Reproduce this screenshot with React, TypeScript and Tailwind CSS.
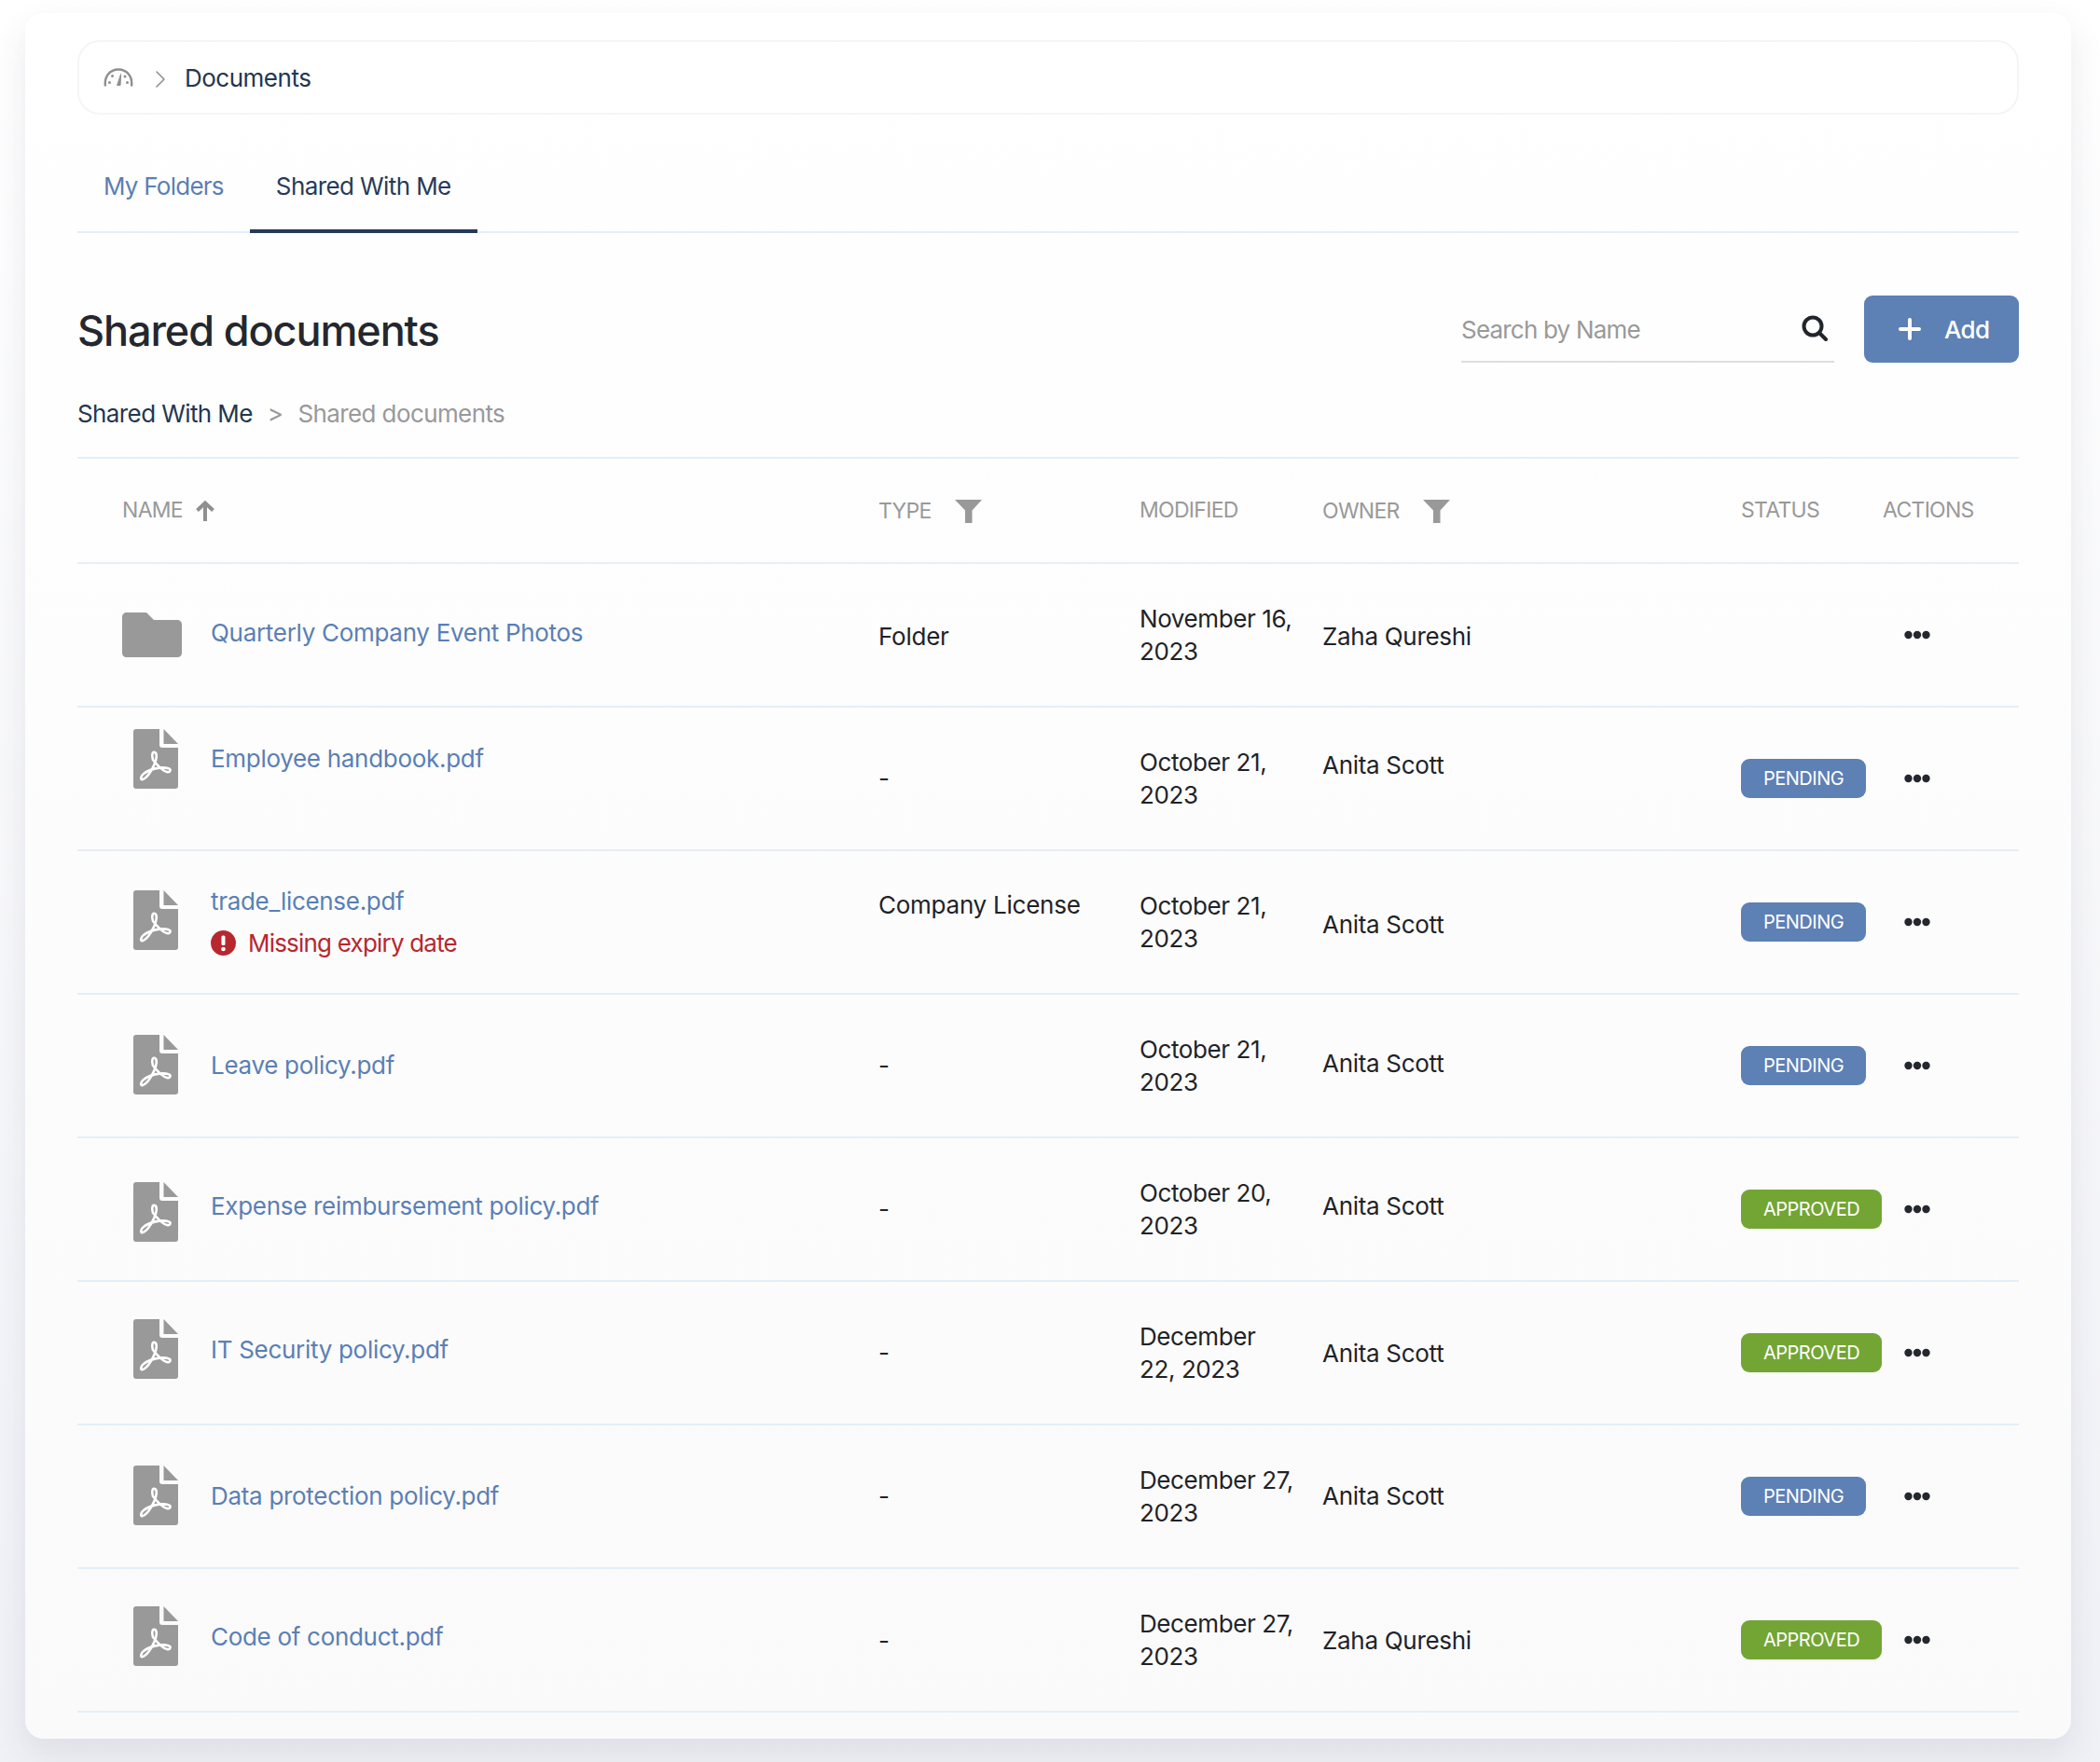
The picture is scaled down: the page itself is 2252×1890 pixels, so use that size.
import { ChevronRight } from "lucide-react";

type Row = {
  kind: "folder" | "pdf";
  name: string;
  error?: string;
  type: string;
  date: [string, string];
  owner: string;
  status?: "PENDING" | "APPROVED";
  nameShift: string;
  iconShift: string;
  typeShift: string;
  ownerShift: string;
};

const rows: Row[] = [
  { kind: "folder", name: "Quarterly Company Event Photos", type: "Folder", date: ["November 16,", "2023"], owner: "Zaha Qureshi", nameShift: "mb-[4px]", iconShift: "mb-[0px]", typeShift: "mt-[4px]", ownerShift: "mt-[4px]" },
  { kind: "pdf", name: "Employee handbook.pdf", type: "-", date: ["October 21,", "2023"], owner: "Anita Scott", status: "PENDING", nameShift: "mb-[42px]", iconShift: "mb-[42px]", typeShift: "mt-[0px]", ownerShift: "mb-[28px]" },
  { kind: "pdf", name: "trade_license.pdf", error: "Missing expiry date", type: "Company License", date: ["October 21,", "2023"], owner: "Anita Scott", status: "PENDING", nameShift: "mb-[0px]", iconShift: "mb-[4px]", typeShift: "mb-[36px]", ownerShift: "mt-[6px]" },
  { kind: "pdf", name: "Leave policy.pdf", type: "-", date: ["October 21,", "2023"], owner: "Anita Scott", status: "PENDING", nameShift: "mb-[0px]", iconShift: "mb-[2px]", typeShift: "mt-[0px]", ownerShift: "mb-[4px]" },
  { kind: "pdf", name: "Expense reimbursement policy.pdf", type: "-", date: ["October 20,", "2023"], owner: "Anita Scott", status: "APPROVED", nameShift: "mb-[6px]", iconShift: "mt-[6px]", typeShift: "mt-[0px]", ownerShift: "mb-[6px]" },
  { kind: "pdf", name: "IT Security policy.pdf", type: "-", date: ["December", "22, 2023"], owner: "Anita Scott", status: "APPROVED", nameShift: "mb-[6px]", iconShift: "mb-[8px]", typeShift: "mt-[0px]", ownerShift: "mt-[2px]" },
  { kind: "pdf", name: "Data protection policy.pdf", type: "-", date: ["December 27,", "2023"], owner: "Anita Scott", status: "PENDING", nameShift: "mb-[0px]", iconShift: "mb-[3px]", typeShift: "mt-[0px]", ownerShift: "mb-[0px]" },
  { kind: "pdf", name: "Code of conduct.pdf", type: "-", date: ["December 27,", "2023"], owner: "Zaha Qureshi", status: "APPROVED", nameShift: "mb-[6px]", iconShift: "mb-[8px]", typeShift: "mt-[2px]", ownerShift: "mt-[2px]" },
];

const GaugeIcon = () => (
  <svg width="32" height="20" viewBox="0 0 32 20" fill="none">
    <path d="M2 19.5C0.5 9 7 1.5 16 1.5S31.5 9 30 19.5" stroke="#8f8f8f" strokeWidth="2.4" />
    <path d="M14.6 18.5L18.6 6.5L18 18.5Z" fill="#8f8f8f" stroke="#8f8f8f" strokeWidth="1" />
    <circle cx="6.5" cy="15.5" r="1.5" fill="#8f8f8f" />
    <circle cx="9.5" cy="8.5" r="1.5" fill="#8f8f8f" />
    <circle cx="23" cy="9" r="1.5" fill="#8f8f8f" />
    <circle cx="25.5" cy="15.5" r="1.5" fill="#8f8f8f" />
  </svg>
);

const FilterIcon = () => (
  <svg width="29" height="25" viewBox="0 0 29 25" fill="#999999">
    <path d="M0 0H29L18.5 11.5V25H11V11.5Z" />
  </svg>
);

const SortIcon = () => (
  <svg width="20" height="22" viewBox="0 0 20 22" fill="none" stroke="#8f8f8f" strokeWidth="4">
    <path d="M10 22V3" />
    <path d="M1.5 10.5L10 2.5L18.5 10.5" />
  </svg>
);

const SearchIcon = () => (
  <svg width="28" height="28" viewBox="0 0 28 28" fill="none" stroke="#22262b" strokeWidth="4" strokeLinecap="round">
    <circle cx="12" cy="12" r="9.5" />
    <path d="M19 19L26 26" />
  </svg>
);

const PlusIcon = () => (
  <svg width="24" height="24" viewBox="0 0 24 24" fill="none" stroke="#ffffff" strokeWidth="4" strokeLinecap="round">
    <path d="M12 2V22" />
    <path d="M2 12H22" />
  </svg>
);

const FolderIcon = () => (
  <svg width="64" height="48" viewBox="0 0 64 48" fill="#999999">
    <path d="M5 0H26L34 8H59C62 8 64 10 64 13V43C64 46 62 48 59 48H5C2 48 0 46 0 43V5C0 2 2 0 5 0Z" />
  </svg>
);

const PdfIcon = () => (
  <svg width="48" height="64" viewBox="0 0 48 64">
    <path d="M3 0H28V17C28 19 29 20 31 20H48V61C48 63 47 64 45 64H3C1 64 0 63 0 61V3C0 1 1 0 3 0Z" fill="#999999" />
    <path d="M32.5 0L48 16H32.5Z" fill="#999999" />
    <path
      d="M21 33C19 27 21 24 23 25C26 26 25 33 22 39C19 46 14 53 10 54C7 55 8 50 11 48C17 43 30 40 37 42C41 43 40 47 36 46C31 45 25 38 21 33Z"
      fill="none"
      stroke="#ffffff"
      strokeWidth="2.6"
    />
  </svg>
);

const ErrorIcon = () => (
  <svg width="27" height="27" viewBox="0 0 27 27">
    <circle cx="13.5" cy="13.5" r="13.5" fill="#b8272e" />
    <rect x="11.5" y="5.5" width="4" height="10.5" rx="1.5" fill="#ffffff" />
    <circle cx="13.5" cy="20" r="2.3" fill="#ffffff" />
  </svg>
);

const DotsIcon = () => (
  <svg width="28" height="10" viewBox="0 0 28 10" fill="#24272e">
    <circle cx="4.5" cy="5" r="4.2" />
    <circle cx="14" cy="5" r="4.2" />
    <circle cx="23.5" cy="5" r="4.2" />
  </svg>
);

const gridCols = "grid grid-cols-[859px_280px_196px_449px_152px_1fr] items-center";

export default function App() {
  return (
    <div className="w-[2252px] h-[1890px] bg-gradient-to-b from-white to-[#f0f1f6] pl-[27px] pt-[14px] font-['Inter',sans-serif] text-[26px] leading-[35.5px] tracking-[-0.4px] overflow-hidden">
      <div className="w-[2194px] h-[1851px] rounded-[20px] bg-gradient-to-b from-white to-[#fafafa] shadow-[0_16px_36px_rgba(60,60,90,0.10)] px-[56px] pt-[29px]">
        {/* Top breadcrumb */}
        <div className="h-[80px] rounded-[24px] border-2 border-[#f4f5f6] flex items-center pl-[26px]">
          <GaugeIcon />
          <ChevronRight className="ml-[13px] mt-[3px] w-[32px] h-[32px] text-[#8f8f8f]" strokeWidth={1.2} />
          <span className="ml-[10px] mt-[1px] text-[#24364f] tracking-[-0.5px]">Documents</span>
        </div>

        {/* Tabs */}
        <div className="h-[127px] border-b-2 border-[#e3effa] flex items-end">
          <div className="px-[28px] h-[81px] pt-[13px] -mb-[2px] text-[#5a7fb5] tracking-[-0.75px]">My Folders</div>
          <div className="px-[28px] h-[81px] pt-[13px] -mb-[2px] border-b-4 border-[#263b5a] text-[#263b5a] tracking-[-0.6px]">Shared With Me</div>
        </div>

        {/* Title row */}
        <div className="mt-[67px] h-[72px] flex items-center justify-between">
          <h1 className="mt-[3px] text-[45px] font-medium text-[#24272e] tracking-[-1.1px]">Shared documents</h1>
          <div className="flex items-center gap-[32px]">
            <div className="w-[400px] h-[72px] border-b-2 border-[#dddddd] flex items-center justify-between pr-[7px] text-[#999999] tracking-[-0.8px]">
              <span className="mt-[4px]">Search by Name</span>
              <SearchIcon />
            </div>
            <button className="w-[166px] h-[72px] rounded-[9px] bg-[#5d80b5] text-white flex items-center pl-[37px] gap-[25px] font-medium">
              <PlusIcon />
              <span className="mt-[1px] tracking-[-0.7px]">Add</span>
            </button>
          </div>
        </div>

        {/* Sub breadcrumb */}
        <div className="mt-[37px] h-[36px] flex items-center text-[#24364f] tracking-[-0.6px]">
          <span>Shared With Me</span>
          <span className="ml-[16px] text-[#999999]">&gt;</span>
          <span className="ml-[16px] text-[#999999]">Shared documents</span>
        </div>

        {/* Table */}
        <div className="mt-[28px] border-t-2 border-[#e3effa]">
          <div className={`${gridCols} h-[113px] border-b-2 border-[#e3effa] text-[23px] text-[#999999] tracking-[-0.7px]`}>
            <div className="pl-[48px] flex items-center gap-[14px]">
              NAME
              <SortIcon />
            </div>
            <div className="flex items-center gap-[25px] mt-[2px]">
              TYPE
              <FilterIcon />
            </div>
            <div>MODIFIED</div>
            <div className="flex items-center gap-[25px] mt-[2px]">
              OWNER
              <FilterIcon />
            </div>
            <div>STATUS</div>
            <div>ACTIONS</div>
          </div>
          {rows.map((row) => {
            return (
              <div key={row.name} className={`${gridCols} h-[154px] border-b-2 border-[#e3effa] text-[#1f2328]`}>
                <div className="flex items-center">
                  {row.kind === "folder" ? (
                    <div className={`ml-[48px] w-[95px] ${row.iconShift}`}>
                      <FolderIcon />
                    </div>
                  ) : (
                    <div className={`ml-[60px] w-[83px] ${row.iconShift}`}>
                      <PdfIcon />
                    </div>
                  )}
                  <div className={row.nameShift}>
                    <div className="text-[#5a7fb5] tracking-[-0.3px]">{row.name}</div>
                    {row.error && (
                      <div className="mt-[9px] flex items-center gap-[13px] text-[#b8272e] tracking-[-0.8px]">
                        <ErrorIcon />
                        {row.error}
                      </div>
                    )}
                  </div>
                </div>
                <div className={`${row.typeShift} tracking-[-0.25px]`}>{row.type}</div>
                <div>
                  {row.date[0]}
                  <br />
                  {row.date[1]}
                </div>
                <div className={`${row.ownerShift} tracking-[-0.3px]`}>{row.owner}</div>
                <div>
                  {row.status && (
                    <span
                      className={
                        row.status === "APPROVED"
                          ? "inline-block h-[42px] leading-[42px] px-[24px] rounded-[9px] text-[20px] tracking-[-0.5px] text-white bg-[#73a534]"
                          : "inline-block h-[42px] leading-[42px] px-[24px] rounded-[9px] text-[20px] tracking-[-0.5px] text-white bg-[#5d80b5]"
                      }
                    >
                      {row.status}
                    </span>
                  )}
                </div>
                <div className="pl-[23px]">
                  <DotsIcon />
                </div>
              </div>
            );
          })}
        </div>
      </div>
    </div>
  );
}
